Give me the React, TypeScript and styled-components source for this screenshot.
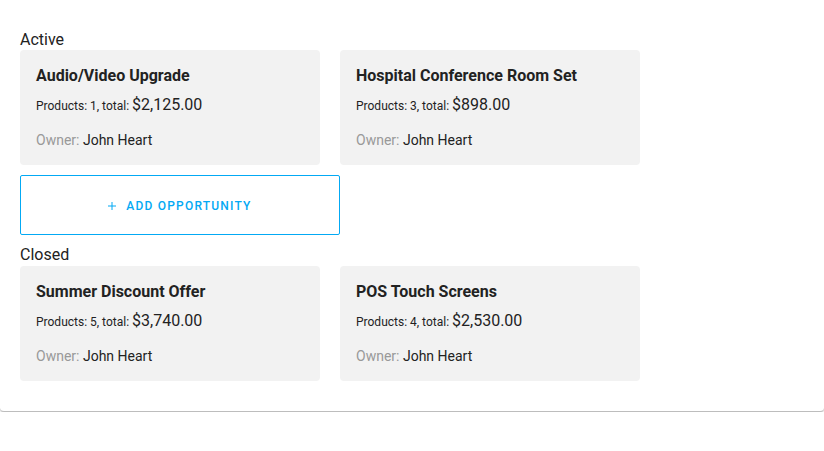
import React from 'react';
import styled, { createGlobalStyle } from 'styled-components';

const GlobalStyle = createGlobalStyle`
  body {
    margin: 0;
    background: #fff;
    font-family: Roboto, "Liberation Sans", sans-serif;
    color: #222;
  }
`;

const Panel = styled.div`
  width: 824px;
  box-sizing: border-box;
  padding: 30px 20px 30px;
  background: #fff;
  border-bottom: 1px solid #bdbdbd;
  border-radius: 0 0 4px 4px;
  box-shadow: 0 1px 2px rgba(0, 0, 0, 0.18);
`;

const Group = styled.section`
  display: flex;
  flex-direction: column;
`;

const GroupLabel = styled.div<{ $gapBelow?: number }>`
  font-size: 16px;
  line-height: 20px;
  margin-bottom: ${(p) => p.$gapBelow ?? 0}px;
`;

const CardGrid = styled.div`
  display: grid;
  grid-template-columns: repeat(2, 300px);
  gap: 20px;
`;

const Card = styled.div`
  background: #f2f2f2;
  border-radius: 4px;
  padding: 16px;
  height: 115px;
  box-sizing: border-box;
`;

const CardTitle = styled.div`
  font-size: 16px;
  line-height: 20px;
  font-weight: 700;
`;

const Totals = styled.div`
  margin-top: 9px;
  line-height: 20px;
  font-size: 12px;
`;

const Amount = styled.span`
  font-size: 16px;
`;

const Owner = styled.div`
  margin-top: 14px;
  font-size: 14px;
  line-height: 20px;
`;

const Muted = styled.span`
  color: #999;
`;

const AddButton = styled.button`
  margin: 10px 0;
  width: 320px;
  height: 60px;
  padding: 1px 0 0;
  background: #fff;
  border: 1px solid #03a9f4;
  border-radius: 2px;
  color: #03a9f4;
  font-family: Roboto, "Liberation Sans", sans-serif;
  font-size: 12px;
  font-weight: 500;
  letter-spacing: 1.2px;
  display: flex;
  align-items: center;
  justify-content: center;
  gap: 10px;
  cursor: pointer;
`;

interface Opportunity {
  name: string;
  products: number;
  total: string;
  owner: string;
}

const active: Opportunity[] = [
  { name: 'Audio/Video Upgrade', products: 1, total: '$2,125.00', owner: 'John Heart' },
  { name: 'Hospital Conference Room Set', products: 3, total: '$898.00', owner: 'John Heart' },
];

const closed: Opportunity[] = [
  { name: 'Summer Discount Offer', products: 5, total: '$3,740.00', owner: 'John Heart' },
  { name: 'POS Touch Screens', products: 4, total: '$2,530.00', owner: 'John Heart' },
];

const OpportunityCard: React.FC<{ item: Opportunity }> = ({ item }) => (
  <Card>
    <CardTitle>{item.name}</CardTitle>
    <Totals>
      Products: {item.products}, total: <Amount>{item.total}</Amount>
    </Totals>
    <Owner>
      <Muted>Owner: </Muted>
      {item.owner}
    </Owner>
  </Card>
);

const PlusIcon = () => (
  <svg width="8" height="8" viewBox="0 0 8 8" aria-hidden>
    <path d="M4 0v8M0 4h8" stroke="currentColor" strokeWidth="1" fill="none" />
  </svg>
);

const App: React.FC = () => (
  <>
    <GlobalStyle />
    <Panel>
      <Group>
        <GroupLabel>Active</GroupLabel>
        <CardGrid>
          {active.map((o) => (
            <OpportunityCard key={o.name} item={o} />
          ))}
        </CardGrid>
      </Group>
      <AddButton>
        <PlusIcon />
        ADD OPPORTUNITY
      </AddButton>
      <Group>
        <GroupLabel $gapBelow={1}>Closed</GroupLabel>
        <CardGrid>
          {closed.map((o) => (
            <OpportunityCard key={o.name} item={o} />
          ))}
        </CardGrid>
      </Group>
    </Panel>
  </>
);

export default App;
